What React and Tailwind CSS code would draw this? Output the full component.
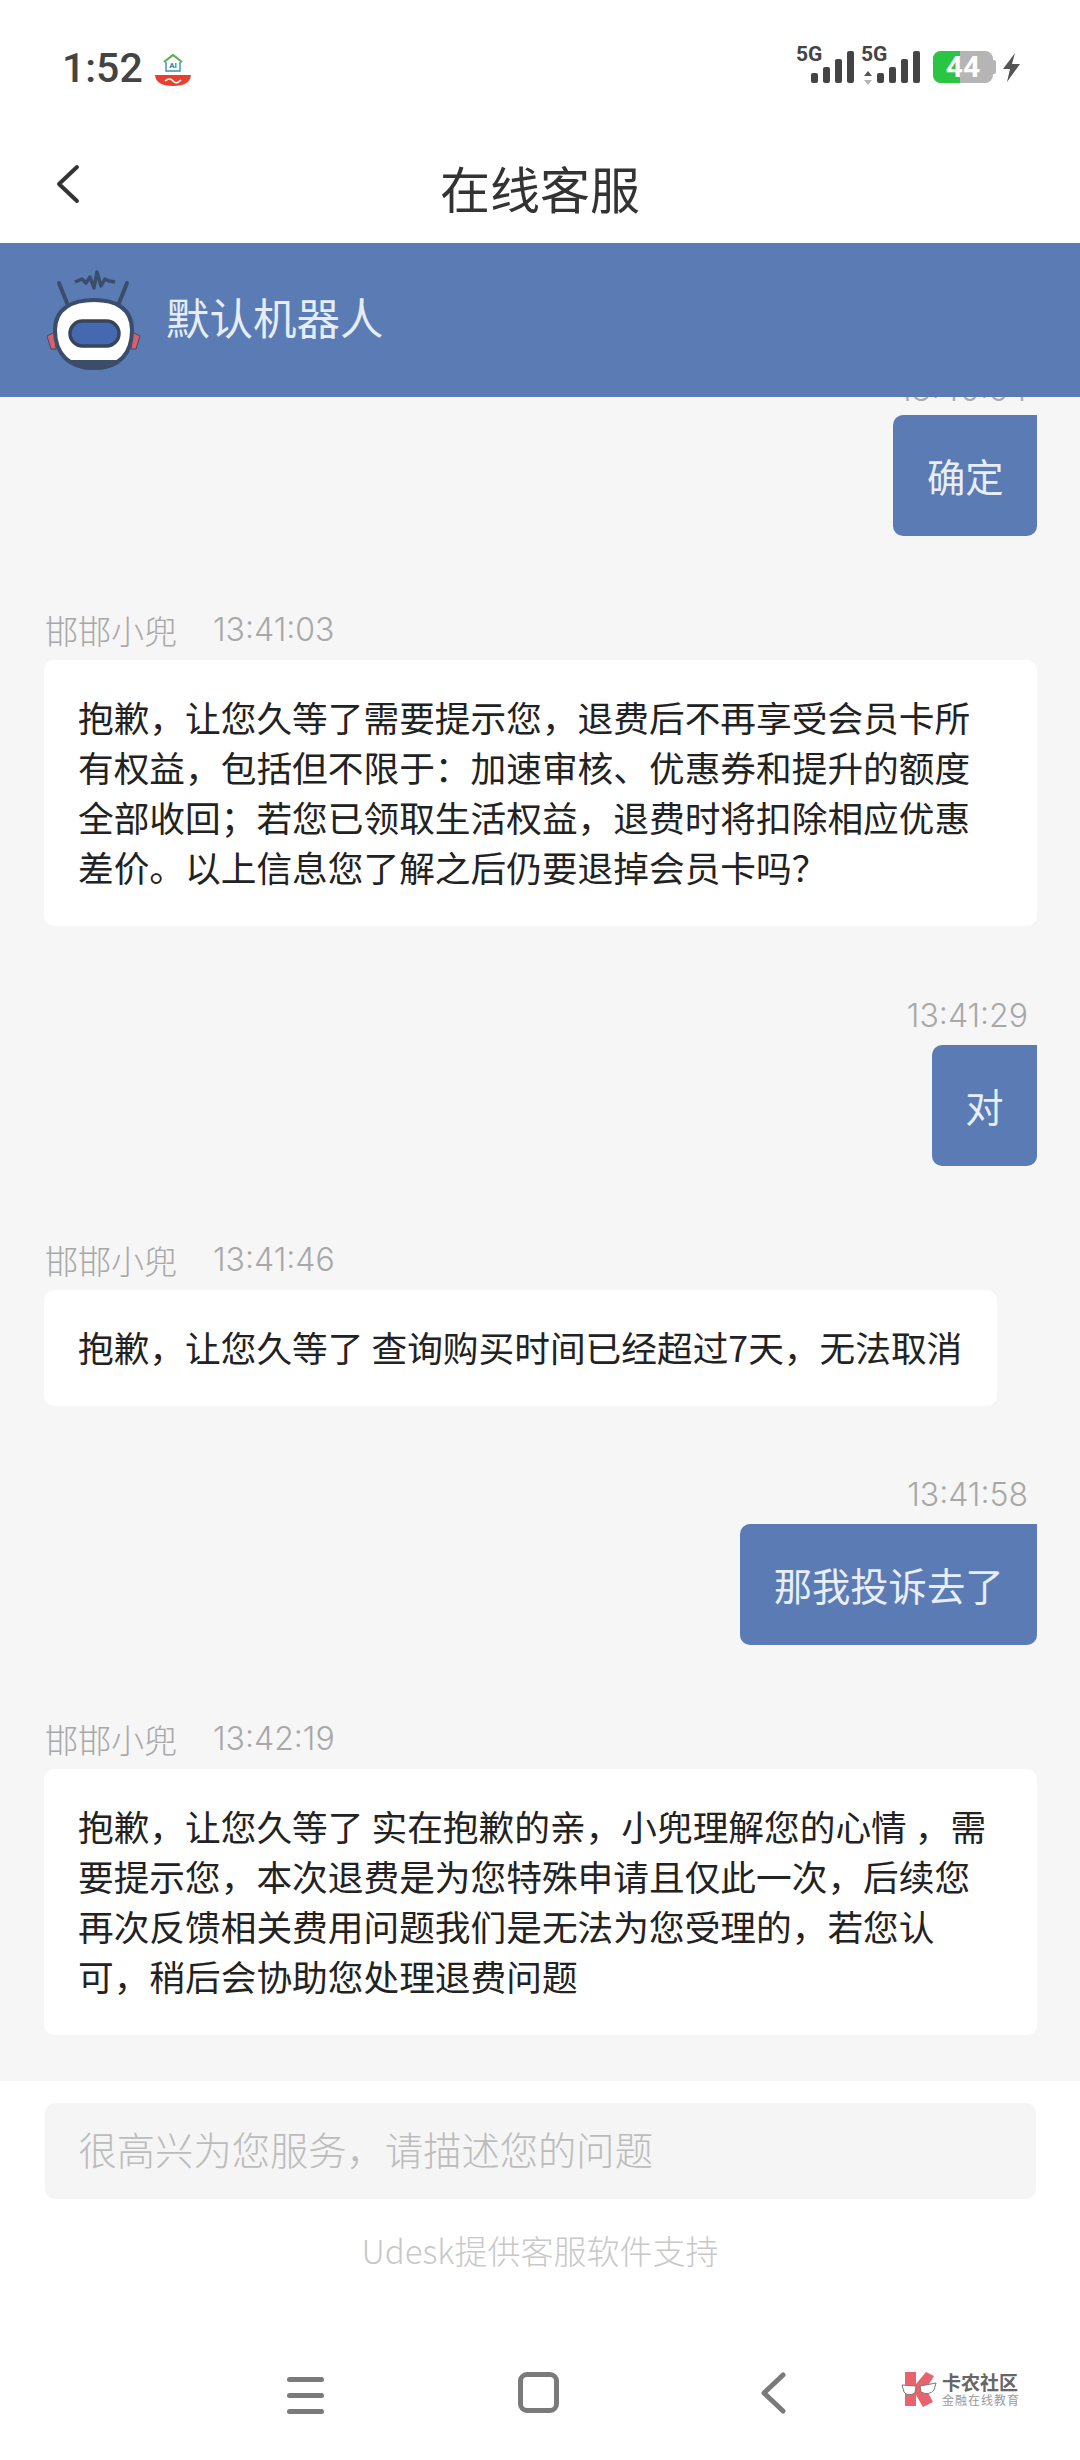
const cjk = "font-['Noto_Sans_CJK_SC','Noto_Sans',sans-serif]";

const leftOne = [
  '抱歉，让您久等了需要提示您，退费后不再享受会员卡所',
  '有权益，包括但不限于：加速审核、优惠券和提升的额度',
  '全部收回；若您已领取生活权益，退费时将扣除相应优惠',
  '差价。以上信息您了解之后仍要退掉会员卡吗？',
];
const leftThree = [
  '抱歉，让您久等了 实在抱歉的亲，小兜理解您的心情 ，需',
  '要提示您，本次退费是为您特殊申请且仅此一次，后续您',
  '再次反馈相关费用问题我们是无法为您受理的，若您认',
  '可，稍后会协助您处理退费问题',
];

function SignalBars({ className }) {
  return (
    <div className={`flex items-end gap-[5px] ${className}`}>
      <div className="w-[7px] h-[10px] rounded-[2px] bg-[#444444]" />
      <div className="w-[7px] h-[16px] rounded-[2px] bg-[#444444]" />
      <div className="w-[7px] h-[24px] rounded-[2px] bg-[#444444]" />
      <div className="w-[7px] h-[32px] rounded-[2px] bg-[#444444]" />
    </div>
  );
}

function StatusBar() {
  return (
    <div className="h-[130px] bg-white relative shrink-0">
      <div className="absolute left-[62px] top-[45px] text-[41px] leading-[46px] font-medium text-[#444444] font-['Roboto',sans-serif]">
        1:52
      </div>
      {/* little app badge next to the clock */}
      <div className="absolute left-[154px] top-[54px] w-[38px] h-[33px] flex flex-col items-center">
        <div className="relative w-[20px] h-[18px]">
          <svg className="absolute left-0 top-0" width="20" height="18" viewBox="0 0 20 18">
            <path d="M3 8 V17 H17 V8" fill="none" stroke="#3c8fb0" strokeWidth="1.4" />
            <path d="M1 8 L10 1 L19 8" fill="none" stroke="#5bb04a" strokeWidth="2.2" />
          </svg>
          <span className="absolute left-0 right-0 top-[7px] text-center text-[8px] leading-[9px] font-bold text-[#2f7f9f] font-['Roboto',sans-serif]">AI</span>
        </div>
        <svg className="mt-[3px]" width="38" height="12" viewBox="0 0 38 12">
          <path d="M1 0 H37 Q36 11 19 11 Q2 11 1 0 Z" fill="#e8402f" />
          <path d="M11 6 Q16 2 19 6 T27 5" fill="none" stroke="#ffffff" strokeWidth="1.6" />
        </svg>
      </div>
      <span className="absolute left-[796px] top-[43px] text-[21px] leading-[22px] font-bold text-[#444444] font-['Roboto',sans-serif]">5G</span>
      <SignalBars className="absolute left-[811px] top-[51px]" />
      <span className="absolute left-[861px] top-[43px] text-[21px] leading-[22px] font-bold text-[#444444] font-['Roboto',sans-serif]">5G</span>
      <svg className="absolute left-[864px] top-[71px]" width="8" height="14" viewBox="0 0 8 14">
        <path d="M4 0 L8 5 H0 Z" fill="#555555" />
        <path d="M4 14 L8 9 H0 Z" fill="#b5b5b5" />
      </svg>
      <SignalBars className="absolute left-[877px] top-[51px]" />
      <div className="absolute left-[933px] top-[51px] w-[60px] h-[32px] rounded-[8px] bg-[#b5b5b5]">
        <div className="w-[27px] h-full rounded-l-[8px] bg-[#2ac643]" />
        <div className="absolute inset-0 flex items-center justify-center text-[30px] leading-[32px] font-bold text-white font-['Roboto',sans-serif]">
          44
        </div>
      </div>
      <div className="absolute left-[993px] top-[60px] w-[3px] h-[14px] rounded-r-[2px] bg-[#b5b5b5]" />
      <svg className="absolute left-[1003px] top-[53px]" width="17" height="29" viewBox="0 0 17 29">
        <path d="M12 0 L0 16 H7 L4 29 L17 11 H9 Z" fill="#555555" />
      </svg>
    </div>
  );
}

function Robot() {
  return (
    <svg width="94" height="100" viewBox="0 0 94 100">
      <path d="M12 13 L22 38" stroke="#3a4d6b" strokeWidth="4" strokeLinecap="round" />
      <path d="M80 13 L70 38" stroke="#3a4d6b" strokeWidth="4" strokeLinecap="round" />
      <path d="M28 12 L35 9 L39 13 L43 7 L47 18 L50 2 L54 16 L58 9 L62 11 L68 12" fill="none" stroke="#3a4d6b" strokeWidth="3.5" strokeLinejoin="round" />
      <path d="M0 66 L8 62 L9 79 L4 79 Z" fill="#d9606b" stroke="#3a4d6b" strokeWidth="1" />
      <path d="M93 66 L85 62 L84 79 L89 79 Z" fill="#d9606b" stroke="#3a4d6b" strokeWidth="1" />
      <path d="M8 60 C8 38 26 30 47 30 C68 30 85 38 85 60 C85 84 72 98 47 98 C22 98 8 84 8 60 Z" fill="#ffffff" stroke="#3a4d6b" strokeWidth="4" />
      <path d="M18 90 H76 C68 97 58 100 47 100 C36 100 26 97 18 90 Z" fill="#3a4d6b" />
      <rect x="23" y="51" width="49" height="25" rx="12.5" fill="#4569b0" stroke="#3a4458" strokeWidth="3.5" />
    </svg>
  );
}

function Meta({ time }) {
  return (
    <div className="flex items-center h-[40px] ml-[45px] text-[33px] leading-[40px] font-light text-[#a8a8a8]">
      <span className="w-[168px]">邯邯小兜</span>
      <span className="font-['Inter',sans-serif] text-[32px]">{time}</span>
    </div>
  );
}

function LeftBubble({ lines, className }) {
  return (
    <div className={`mt-[10px] ml-[44px] bg-white rounded-[10px] pl-[34px] pr-[20px] pt-[32px] pb-[34px] text-[35.7px] leading-[50px] text-[#222222] ${className}`}>
      {lines.map((line) => (
        <div key={line} className="whitespace-pre">{line}</div>
      ))}
    </div>
  );
}

function RightBubble({ text }) {
  return (
    <div className="self-end mr-[43px] mt-[9px] h-[121px] px-[33.5px] flex items-center bg-[#5b7bb5] rounded-[10px] rounded-tr-none text-[38.3px] text-[#e8eef8]">
      {text}
    </div>
  );
}

function RightTime({ time }) {
  return (
    <div className="self-end mr-[52px] h-[40px] font-['Inter',sans-serif] text-[32px] leading-[40px] font-light text-[#a8a8a8]">{time}</div>
  );
}

export default function App() {
  return (
    <div className={`w-[1080px] h-[2460px] flex flex-col bg-white overflow-hidden ${cjk}`}>
      <StatusBar />

      <div className="h-[113px] shrink-0 flex items-center justify-center relative bg-white">
        <svg className="absolute left-[55px] top-[33px]" width="26" height="42" viewBox="0 0 26 42">
          <path d="M22 4 L4 21 L22 38" fill="none" stroke="#333333" strokeWidth="4" strokeLinecap="round" strokeLinejoin="round" />
        </svg>
        <span className="text-[50px] leading-[60px] text-[#333333]">在线客服</span>
      </div>

      <div className="h-[154px] shrink-0 bg-[#5b7bb5] flex items-center pl-[47px] gap-[25px]">
        <Robot />
        <span className="text-[43.5px] leading-[60px] pb-[6px] text-[#e6edf7]">默认机器人</span>
      </div>

      <div className="h-[1684px] shrink-0 bg-[#f6f6f6] flex flex-col overflow-hidden">
        {/* previous timestamp, scrolled almost out of view */}
        <div className="self-end mr-[52px] -mt-[27px] -mb-[4px] h-[40px] shrink-0 font-['Inter',sans-serif] text-[32px] leading-[40px] font-light text-[#a8a8a8]">13:40:54</div>
        <RightBubble text="确定" />

        <div className="h-[74px] shrink-0" />
        <Meta time="13:41:03" />
        <LeftBubble lines={leftOne} className="mr-[43px]" />

        <div className="h-[70px] shrink-0" />
        <RightTime time="13:41:29" />
        <RightBubble text="对" />

        <div className="h-[74px] shrink-0" />
        <Meta time="13:41:46" />
        <LeftBubble lines={['抱歉，让您久等了 查询购买时间已经超过7天，无法取消']} className="mr-[83px]" />

        <div className="h-[69px] shrink-0" />
        <RightTime time="13:41:58" />
        <RightBubble text="那我投诉去了" />

        <div className="h-[74px] shrink-0" />
        <Meta time="13:42:19" />
        <LeftBubble lines={leftThree} className="mr-[43px]" />
      </div>

      <div className="flex-1 bg-white flex flex-col items-center relative">
        <div className="mt-[22px] w-[991px] h-[96px] flex items-center pl-[34px] pb-[5px] rounded-[10px] bg-[#f5f5f5] text-[38.3px] text-[#bcbcbc] font-light">
          很高兴为您服务，请描述您的问题
        </div>
        <div className="mt-[29px] text-[33px] leading-[44px] text-[#c8c8c8] font-light">Udesk提供客服软件支持</div>

        <div className="absolute left-0 top-[291px] w-full h-[42px]">
          <div className="absolute left-[287px] top-[5px] w-[37px] flex flex-col gap-[11px]">
            <div className="h-[5px] rounded-full bg-[#7a7a7a]" />
            <div className="h-[5px] rounded-full bg-[#7a7a7a]" />
            <div className="h-[5px] rounded-full bg-[#7a7a7a]" />
          </div>
          <div className="absolute left-[518px] top-0 w-[41px] h-[41px] rounded-[9px] border-[5px] border-[#7a7a7a]" />
          <svg className="absolute left-[759px] top-0" width="28" height="42" viewBox="0 0 28 42">
            <path d="M24 3 L5 21 L24 39" fill="none" stroke="#7a7a7a" strokeWidth="5" strokeLinecap="round" strokeLinejoin="round" />
          </svg>
        </div>

        {/* watermark over the nav bar */}
        <div className="absolute left-[900px] top-[290px] flex items-center gap-[4px]">
          <svg width="38" height="36" viewBox="0 0 38 36">
            <path d="M5 1 H16 V13 L26 1 L34 5 L26 18 L33 31 L23 36 L16 24 V35 H5 Z" fill="#e9636f" />
            <path d="M2 14 L16 15 L15 22 Q8 26 4 21 Z" fill="#ffffff" stroke="#777777" strokeWidth="1" />
            <path d="M36 12 L20 15 L21 21 Q29 25 34 19 Z" fill="#ffffff" stroke="#777777" strokeWidth="1" />
          </svg>
          <div className="flex flex-col">
            <span className="text-[19px] leading-[21px] font-bold text-[#666666] whitespace-nowrap">卡农社区</span>
            <span className="text-[12px] leading-[15px] text-[#9a9a9a] tracking-[1px] whitespace-nowrap">金融在线教育</span>
          </div>
        </div>
      </div>
    </div>
  );
}
